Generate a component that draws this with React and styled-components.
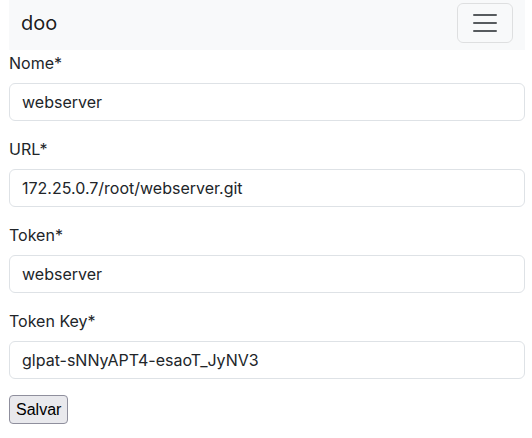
import styled, { createGlobalStyle } from 'styled-components';

const GlobalStyle = createGlobalStyle`
  body {
    margin: 0;
    padding: 0 7px 0 9px;
    font-family: Inter, "Noto Sans", sans-serif;
    font-size: 16px;
    line-height: 1.5;
    color: #212529;
    background: #fff;
  }
  * { box-sizing: border-box; }
`;

const fields = [
  { label: 'Nome*', value: 'webserver' },
  { label: 'URL*', value: '172.25.0.7/root/webserver.git' },
  { label: 'Token*', value: 'webserver' },
  { label: 'Token Key*', value: 'glpat-sNNyAPT4-esaoT_JyNV3' },
];

const Navbar = styled.nav`
  display: flex;
  align-items: flex-start;
  justify-content: space-between;
  height: 50px;
  padding: 3px 12px 7px;
  background: #f8f9fa;
`;

const Brand = styled.span`
  padding: 5px 0;
  font-size: 20px;
  line-height: 30px;
  color: rgba(0, 0, 0, 0.9);
`;

const Toggler = styled.button`
  display: flex;
  padding: 4px 12px;
  background: transparent;
  border: 1px solid rgba(0, 0, 0, 0.1);
  border-radius: 6px;
  svg { display: block; }
`;

const Form = styled.form`
  display: flex;
  flex-direction: column;
  padding-top: 1px;
`;

const Field = styled.div`
  margin-bottom: 16px;
`;

const Label = styled.label`
  display: block;
  margin-bottom: 8px;
`;

const Input = styled.input`
  display: block;
  width: 100%;
  height: 38px;
  padding: 6px 12px;
  font: inherit;
  color: #212529;
  background: #fff;
  border: 1px solid #dee2e6;
  border-radius: 6px;
  outline: none;
`;

const Submit = styled.button`
  align-self: flex-start;
  height: 29px;
  padding: 1px 6px;
  font-family: "Liberation Sans", Arial, sans-serif;
  font-size: 16px;
  line-height: 24px;
  color: #000;
  background: #e9e9ed;
  border: 1px solid #8f8f9d;
  border-radius: 4px;
`;

const MenuIcon = () => (
  <svg width="30" height="30" viewBox="0 0 30 30">
    <path
      d="M4 7h22M4 15h22M4 23h22"
      stroke="rgba(33,37,41,0.75)"
      strokeWidth="2"
      strokeLinecap="round"
      strokeMiterlimit="10"
    />
  </svg>
);

export default function App() {
  return (
    <>
      <GlobalStyle />
      <Navbar>
        <Brand>doo</Brand>
        <Toggler type="button" aria-label="Toggle navigation">
          <MenuIcon />
        </Toggler>
      </Navbar>
      <Form onSubmit={(e) => e.preventDefault()}>
        {fields.map((f) => (
          <Field key={f.label}>
            <Label>{f.label}</Label>
            <Input defaultValue={f.value} />
          </Field>
        ))}
        <Submit type="submit">Salvar</Submit>
      </Form>
    </>
  );
}
